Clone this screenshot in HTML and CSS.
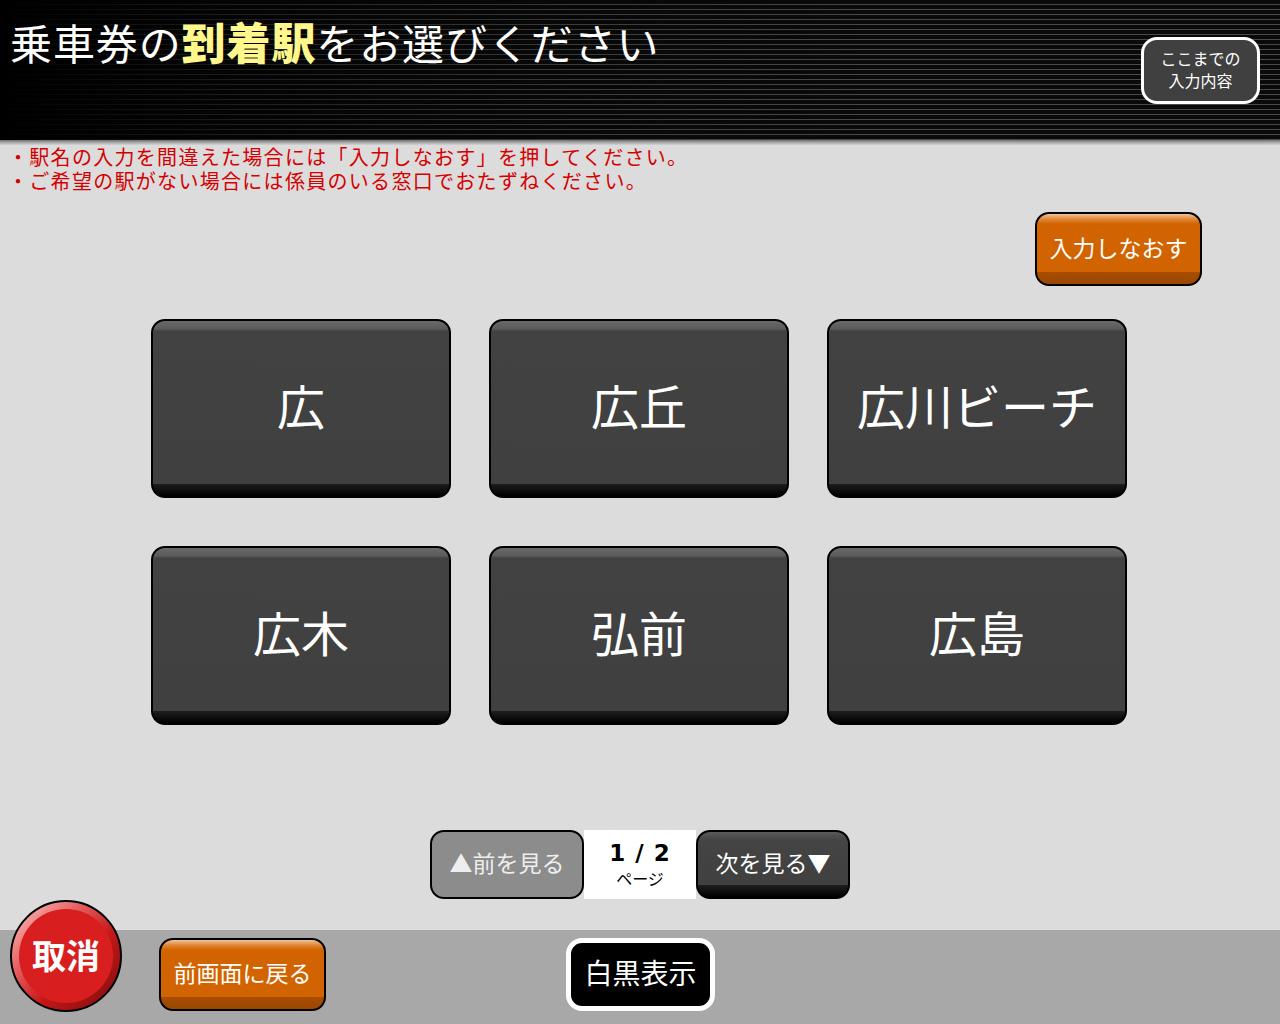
FILE: index.html
```html
<!DOCTYPE html>
<html lang="ja">
<head>
<meta charset="utf-8">
<title>到着駅選択</title>
<link rel="stylesheet" href="styles.css">
</head>
<body>
<div class="screen">
  <header class="header">
    <h1 class="title">乗車券の<span class="em">到着駅</span>をお選びください</h1>
    <button class="summary">ここまでの<br>入力内容</button>
  </header>
  <div class="divider"></div>
  <main class="main">
    <div class="notes">
      <p>・駅名の入力を間違えた場合には「入力しなおす」を押してください。</p>
      <p>・ご希望の駅がない場合には係員のいる窓口でおたずねください。</p>
    </div>
    <div class="reset-row">
      <button class="btn-orange reset">入力しなおす</button>
    </div>
    <div class="stations">
      <button class="station">広</button>
      <button class="station">広丘</button>
      <button class="station">広川ビーチ</button>
      <button class="station">広木</button>
      <button class="station">弘前</button>
      <button class="station">広島</button>
    </div>
    <div class="pager">
      <button class="page-btn prev">▲前を見る</button>
      <div class="page-info">
        <div class="page-num">1 / 2</div>
        <div class="page-label">ページ</div>
      </div>
      <button class="page-btn next">次を見る▼</button>
    </div>
  </main>
  <footer class="footer">
    <button class="cancel"><span class="cancel-inner">取消</span></button>
    <button class="btn-orange back">前画面に戻る</button>
    <button class="mono">白黒表示</button>
  </footer>
</div>
</body>
</html>
```
FILE: styles.css
```css
* { box-sizing: border-box; }
html, body { margin: 0; padding: 0; }
body {
  width: 1280px;
  height: 1024px;
  overflow: hidden;
  font-family: "Noto Sans CJK JP", "Noto Sans", sans-serif;
  background: #dcdcdc;
}
button {
  font-family: inherit;
  cursor: pointer;
  padding: 0 0 5px 0;
  margin: 0;
}
.screen {
  width: 1280px;
  height: 1024px;
  display: flex;
  flex-direction: column;
}
.header {
  height: 140px;
  display: flex;
  justify-content: space-between;
  align-items: flex-start;
  background:
    linear-gradient(to right, rgba(0,0,0,1) 0%, rgba(0,0,0,0.6) 18%, rgba(0,0,0,0.2) 45%, rgba(0,0,0,0) 70%),
    repeating-linear-gradient(to bottom, #0a0a0a 0px, #0a0a0a 4px, #4a4a4a 4px, #4a4a4a 5px);
}
.title {
  margin: 0;
  padding: 12px 0 0 10px;
  font-size: 42px;
  font-weight: 400;
  line-height: 58px;
  color: #fff;
  letter-spacing: 0.9px;
  white-space: nowrap;
}
.title .em {
  color: #fff68c;
  font-weight: 900;
  font-size: 44px;
}
.summary {
  margin: 37px 20px 0 0;
  width: 119px;
  height: 67px;
  border: 3px solid #fff;
  border-radius: 16px;
  background: #404040;
  color: #fff;
  font-size: 16px;
  line-height: 22px;
  padding-bottom: 3px;
}
.divider {
  height: 5px;
  background: linear-gradient(to bottom, #6e6e6e, #a8a8a8 50%, #d4d4d4);
}
.main {
  height: 785px;
  display: flex;
  flex-direction: column;
  background: #dcdcdc;
}
.notes {
  padding-left: 8px;
  color: #d40000;
  font-size: 20px;
  line-height: 24px;
  letter-spacing: 1.3px;
}
.notes p { margin: 0; white-space: nowrap; }
.reset-row {
  display: flex;
  justify-content: flex-end;
  padding-right: 78px;
  margin-top: 19px;
}
.btn-orange {
  border: 2px solid #000;
  border-radius: 14px;
  color: #fff;
  background: linear-gradient(to bottom,
    #f2c39a 0px, #e08838 5px, #d26400 10px,
    #d26400 calc(100% - 12px), #a94d00 calc(100% - 12px), #9a4600 100%);
}
.reset {
  width: 167px;
  height: 74px;
  font-size: 23px;
}
.stations {
  margin-top: 33px;
  display: grid;
  grid-template-columns: repeat(3, 300px);
  grid-auto-rows: 179px;
  column-gap: 38px;
  row-gap: 48px;
  justify-content: start;
  padding-left: 151px;
}
.station {
  border: 2px solid #000;
  border-radius: 14px;
  color: #fff;
  font-size: 48px;
  font-weight: 400;
  padding-bottom: 9px;
  background: linear-gradient(to bottom,
    #6a6a6a 0px, #5a5a5a 8px, #424242 10px,
    #404040 calc(100% - 12px), #1e1e1e calc(100% - 12px), #000 100%);
}
.pager {
  margin-top: 105px;
  display: flex;
  justify-content: center;
  height: 69px;
}
.page-btn {
  width: 154px;
  height: 69px;
  border: 2px solid #000;
  border-radius: 14px;
  font-size: 23px;
}
.prev {
  background: #8c8c8c;
  color: #eeeeee;
}
.next {
  background: linear-gradient(to bottom,
    #5a5a5a 0px, #444 8px, #404040 calc(100% - 12px), #1e1e1e calc(100% - 12px), #000 100%);
  color: #fff;
}
.page-info {
  width: 112px;
  background: #fff;
  display: flex;
  flex-direction: column;
  align-items: center;
  justify-content: center;
  color: #000;
}
.page-num {
  font-family: "DejaVu Sans", "Noto Sans", sans-serif;
  font-weight: 700;
  font-size: 23px;
  line-height: 27px;
  letter-spacing: 1px;
}
.page-label {
  font-size: 16px;
  line-height: 23px;
}
.footer {
  flex: 1;
  background: #a8a8a8;
  display: flex;
  align-items: flex-start;
  padding-top: 8px;
}
.cancel {
  width: 112px;
  height: 112px;
  margin: -38px 0 0 10px;
  border: 2px solid #000;
  border-radius: 50%;
  padding: 7px;
  background: linear-gradient(135deg, #ffc8c8 0%, #e45a5a 35%, #c41818 60%, #7a0c0c 100%);
  display: flex;
}
.cancel-inner {
  flex: 1;
  border-radius: 50%;
  background: #d81e1e;
  color: #fff;
  font-size: 34px;
  font-weight: 700;
  display: flex;
  align-items: center;
  justify-content: center;
  padding-bottom: 4px;
}
.back {
  margin-left: 37px;
  width: 167px;
  height: 73px;
  font-size: 23px;
}
.mono {
  margin-left: 240px;
  width: 149px;
  height: 73px;
  border: 5px solid #fff;
  border-radius: 16px;
  background: #000;
  color: #fff;
  font-size: 28px;
}
```
